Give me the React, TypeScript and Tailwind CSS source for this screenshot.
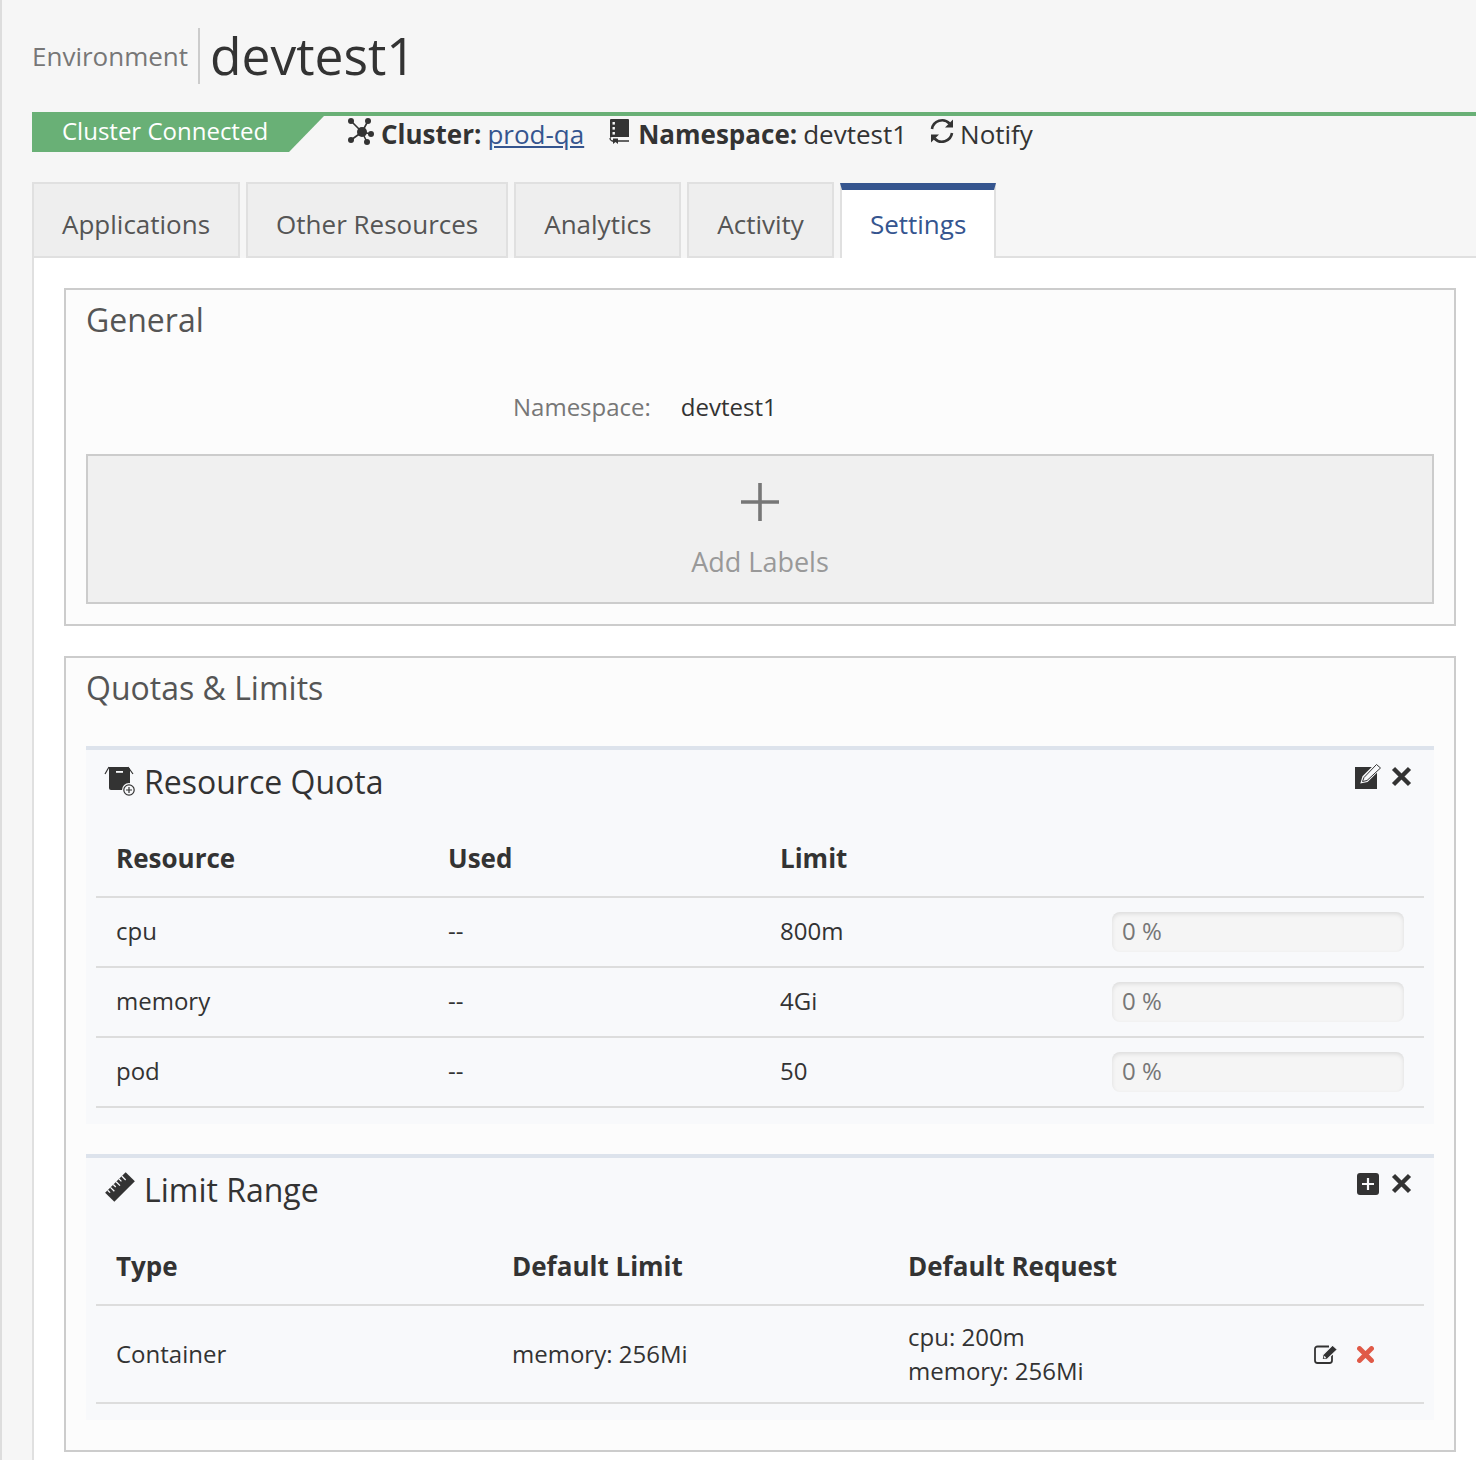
const tabs = ['Applications', 'Other Resources', 'Analytics', 'Activity'];

const ClusterIcon = () => (
  <svg viewBox="0 0 26 27" className="w-[26px] h-[27px] shrink-0 -mt-[6px]" fill="#333" stroke="#333">
    <path d="M3 3 L14 14 M20 3 L14 14 M23 16 L14 14 M19 24 L14 14 M3 22 L14 14" strokeWidth="1.6" />
    <circle cx="14" cy="14" r="5" stroke="none" />
    <circle cx="3" cy="3" r="3" stroke="none" />
    <circle cx="20" cy="3" r="3" stroke="none" />
    <circle cx="23" cy="16" r="3" stroke="none" />
    <circle cx="19" cy="24" r="3" stroke="none" />
    <circle cx="3" cy="22" r="3" stroke="none" />
  </svg>
);

const BookIcon = () => (
  <svg viewBox="0 0 20 25" className="w-5 h-[25px] shrink-0 -mt-[6px]">
    <path d="M1 1 a1 1 0 0 1 1 -1 H19 a1 1 0 0 1 1 1 V18 H3 a2 2 0 0 0 -2 2 Z" fill="#333" />
    <rect x="3.5" y="3" width="2.4" height="2.6" fill="#f6f6f6" />
    <rect x="3.5" y="8" width="2.4" height="2.6" fill="#f6f6f6" />
    <rect x="3.5" y="13" width="2.4" height="2.6" fill="#f6f6f6" />
    <path d="M1 19 a3 3 0 0 0 2 3 H4 M9 22 H20" stroke="#333" strokeWidth="1.3" fill="none" />
    <path d="M4 19.5 H9 V25 L6.5 23 L4 25 Z" fill="#333" />
  </svg>
);

const RefreshIcon = () => (
  <svg viewBox="0 0 24 26" className="w-6 h-[26px] shrink-0 -mt-[6px]" fill="#333">
    <path d="M2 11 A10.2 10.2 0 0 1 19.5 5.5" fill="none" stroke="#333" strokeWidth="2.6" />
    <path d="M23 1.5 V9.5 H15 Z" />
    <path d="M22 15 A10.2 10.2 0 0 1 4.5 20.5" fill="none" stroke="#333" strokeWidth="2.6" />
    <path d="M1 24.5 V16.5 H9 Z" />
  </svg>
);

const BoxIcon = () => (
  <svg viewBox="0 0 32 32" className="w-8 h-8 shrink-0">
    <path d="M5 1 H24 L26 3 V22 a2 2 0 0 1 -2 2 H7 a2 2 0 0 1 -2 -2 Z" fill="#333" />
    <path d="M5 1 L1 8 M24 1 L29 8" stroke="#333" strokeWidth="1.2" fill="none" />
    <rect x="12" y="5" width="7" height="1.8" fill="#f8f9fb" />
    <circle cx="25" cy="24" r="7" fill="#f8f9fb" />
    <circle cx="25" cy="24" r="5.2" fill="none" stroke="#333" strokeWidth="1.2" />
    <path d="M25 21 V27 M22 24 H28" stroke="#333" strokeWidth="1.2" />
  </svg>
);

const RulerIcon = () => (
  <svg viewBox="0 0 30 30" className="w-[30px] h-[30px] shrink-0 -mt-[6px]">
    <g transform="rotate(-45 15 15)">
      <rect x="0.5" y="8.5" width="29" height="13" fill="#333" />
      <path d="M4 8.5 V12 M8 8.5 V14 M12 8.5 V12 M16 8.5 V14 M20 8.5 V12 M24 8.5 V14" stroke="#f8f9fb" strokeWidth="1.3" />
    </g>
  </svg>
);

const PencilSquareIcon = () => (
  <svg viewBox="0 0 27 26" className="w-[27px] h-[26px] shrink-0">
    <rect x="0" y="4" width="22" height="22" fill="#333" />
    <path d="M7 19 L8.5 14 L21 1.5 L25 5 L12 18 Z" fill="#f8f9fb" stroke="#f8f9fb" strokeWidth="2.4" />
    <path d="M7.5 18.5 L9 14.5 L21.5 1.5 L25.5 5 L12 17.5 Z" fill="#f8f9fb" stroke="#333" strokeWidth="1" />
  </svg>
);

const PlusSquareIcon = () => (
  <svg viewBox="0 0 22 22" className="w-[22px] h-[22px] shrink-0">
    <rect width="22" height="22" rx="3" fill="#333" />
    <path d="M11 5 V17 M5 11 H17" stroke="#f8f9fb" strokeWidth="2.2" />
  </svg>
);

const CloseIcon = () => (
  <svg viewBox="0 0 21 21" className="w-[21px] h-[21px] shrink-0">
    <path d="M2.5 2.5 L18.5 18.5 M18.5 2.5 L2.5 18.5" stroke="#333" strokeWidth="4.4" />
  </svg>
);

const EditIcon = () => (
  <svg viewBox="0 0 24 20" className="w-6 h-5 shrink-0">
    <path d="M18 11 V16.5 a2.5 2.5 0 0 1 -2.5 2.5 H3.5 A2.5 2.5 0 0 1 1 16.5 V5 A2.5 2.5 0 0 1 3.5 2.5 H15" fill="none" stroke="#333" strokeWidth="1.8" />
    <path d="M8 15.5 L9 10.5 L18.5 1 L23.5 5.5 L13.5 15 Z" fill="#333" stroke="#f8f9fb" strokeWidth="1.2" />
    <path d="M10 12.5 L11.5 14" stroke="#f8f9fb" strokeWidth="1.6" />
  </svg>
);

const RedCloseIcon = () => (
  <svg viewBox="0 0 17 17" className="w-[17px] h-[17px] shrink-0">
    <path d="M2.5 2.5 L14.5 14.5 M14.5 2.5 L2.5 14.5" stroke="#e05a47" strokeWidth="4.8" strokeLinecap="round" />
  </svg>
);

const progressRows = [
  { name: 'cpu', used: '--', limit: '800m' },
  { name: 'memory', used: '--', limit: '4Gi' },
  { name: 'pod', used: '--', limit: '50' },
];

export default function App() {
  return (
    <div className="h-[1460px] overflow-hidden bg-[#f6f6f6] border-l-2 border-[#dddddd] pl-[30px] text-[#333] font-['Open_Sans',sans-serif]">
      <header className="h-[112px] flex items-center">
        <span className="text-[26px] leading-none text-[#777]">Environment</span>
        <div className="ml-[10px] mr-[10px] w-[2px] h-14 bg-[#ccc]" />
        <h1 className="text-[51.5px] leading-none">devtest1</h1>
      </header>

      <div className="flex h-[70px] border-t-4 border-[#69b076] items-start">
        <div className="-mt-1 h-10 w-[292px] pl-[30px] leading-[38px] text-[24px] text-white bg-[#69b076] [clip-path:polygon(0_0,100%_0,100%_4px,257px_100%,0_100%)]">
          Cluster Connected
        </div>
        <div className="flex items-center ml-[24px] h-[36px] text-[26px] leading-none">
          <ClusterIcon />
          <b className="ml-[7px] font-bold">Cluster:</b>
          <a href="#" className="ml-[6px] text-[#35558f] underline">prod-qa</a>
          <span className="ml-[25px]"><BookIcon /></span>
          <b className="ml-[9px] font-bold">Namespace:</b>
          <span className="ml-[6px]">devtest1</span>
          <span className="ml-[23px]"><RefreshIcon /></span>
          <span className="ml-[6px]">Notify</span>
        </div>
      </div>

      <nav className="flex h-[76px] text-[26px] leading-none">
        {tabs.map((t) => (
          <div key={t} className="mr-[6px] px-[28px] pt-2 flex items-center border-2 border-[#e0e0e0] bg-[#eeeeee] text-[#555]">
            {t}
          </div>
        ))}
        <div className="mt-[1px] px-[28px] flex items-center bg-white border-x-2 border-[#e0e0e0] border-t-[7px] border-t-[#35558f] text-[#35558f]">
          Settings
        </div>
        <div className="flex-1 border-b-2 border-[#e0e0e0]" />
      </nav>

      <main className="h-[1202px] bg-white border-l-2 border-[#e0e0e0] pl-[30px] pr-5 pt-[30px]">
        <section className="h-[338px] border-2 border-[#cccccc] bg-[#fcfcfc] px-5">
          <h2 className="text-[32px] leading-[60px] text-[#555]">General</h2>
          <div className="flex mt-[39px] h-[36px] items-center text-[24px] leading-none">
            <span className="ml-[427px] text-[#777]">Namespace:</span>
            <span className="ml-[30px]">devtest1</span>
          </div>
          <div className="mt-[29px] h-[150px] border-2 border-[#cccccc] bg-[#f0f0f0] flex flex-col items-center pt-[27px] text-[#999]">
            <svg viewBox="0 0 38 38" className="w-[38px] h-[38px]">
              <path d="M19 0 V38 M0 19 H38" stroke="#777" strokeWidth="3.6" />
            </svg>
            <span className="mt-[27px] text-[27px] leading-none">Add Labels</span>
          </div>
        </section>

        <section className="mt-[30px] h-[796px] border-2 border-[#cccccc] bg-[#fcfcfc] px-5">
          <h2 className="text-[32px] leading-[60px] text-[#555]">Quotas &amp; Limits</h2>

          <div className="mt-[28px] h-[378px] border-t-4 border-[#dde3ec] bg-[#f8f9fb] px-[10px]">
            <div className="relative h-[72px] flex items-center pl-[8px] pb-2">
              <BoxIcon />
              <span className="ml-[8px] text-[32px] leading-none">Resource Quota</span>
              <div className="absolute right-[12px] top-[13px] flex items-start gap-[9px]">
                <PencilSquareIcon />
                <div className="mt-[3px]"><CloseIcon /></div>
              </div>
            </div>
            <div className="grid grid-cols-[332px_332px_332px_1fr] h-[76px] items-center border-b-2 border-[#dddddd] pl-5 pb-[2px] font-bold text-[26px]">
              <span>Resource</span>
              <span>Used</span>
              <span>Limit</span>
            </div>
            {progressRows.map((r) => (
              <div key={r.name} className="grid grid-cols-[332px_332px_332px_1fr] h-[70px] items-center border-b-2 border-[#dddddd] pl-5 text-[24px]">
                <span className="-mt-[2px]">{r.name}</span>
                <span className="-mt-[2px]">{r.used}</span>
                <span className="-mt-[2px]">{r.limit}</span>
                <div className="w-[292px] h-10 rounded-lg bg-[#f5f5f5] shadow-[inset_0_2px_4px_rgba(0,0,0,0.1)] pl-[10px] leading-[38px] text-[#777]">
                  0 %
                </div>
              </div>
            ))}
          </div>

          <div className="mt-[30px] h-[266px] border-t-4 border-[#dde3ec] bg-[#f8f9fb] px-[10px]">
            <div className="relative h-[70px] flex items-center pl-[9px] pb-[6px]">
              <RulerIcon />
              <span className="ml-[9px] text-[32px] leading-none">Limit Range</span>
              <div className="absolute right-[12px] top-[15px] flex items-start gap-[12px]">
                <PlusSquareIcon />
                <CloseIcon />
              </div>
            </div>
            <div className="grid grid-cols-[396px_396px_1fr] h-[78px] items-center border-b-2 border-[#dddddd] pl-5 font-bold text-[26px]">
              <span>Type</span>
              <span>Default Limit</span>
              <span>Default Request</span>
            </div>
            <div className="grid grid-cols-[396px_396px_1fr_auto] h-[98px] items-center border-b-2 border-[#dddddd] pl-5 text-[24px] leading-[34px]">
              <span className="-mt-[1px]">Container</span>
              <span className="-mt-[1px]">memory: 256Mi</span>
              <span>
                cpu: 200m
                <br />
                memory: 256Mi
              </span>
              <div className="flex items-center gap-[19px] pr-[50px]">
                <EditIcon />
                <RedCloseIcon />
              </div>
            </div>
          </div>
        </section>
      </main>
    </div>
  );
}
